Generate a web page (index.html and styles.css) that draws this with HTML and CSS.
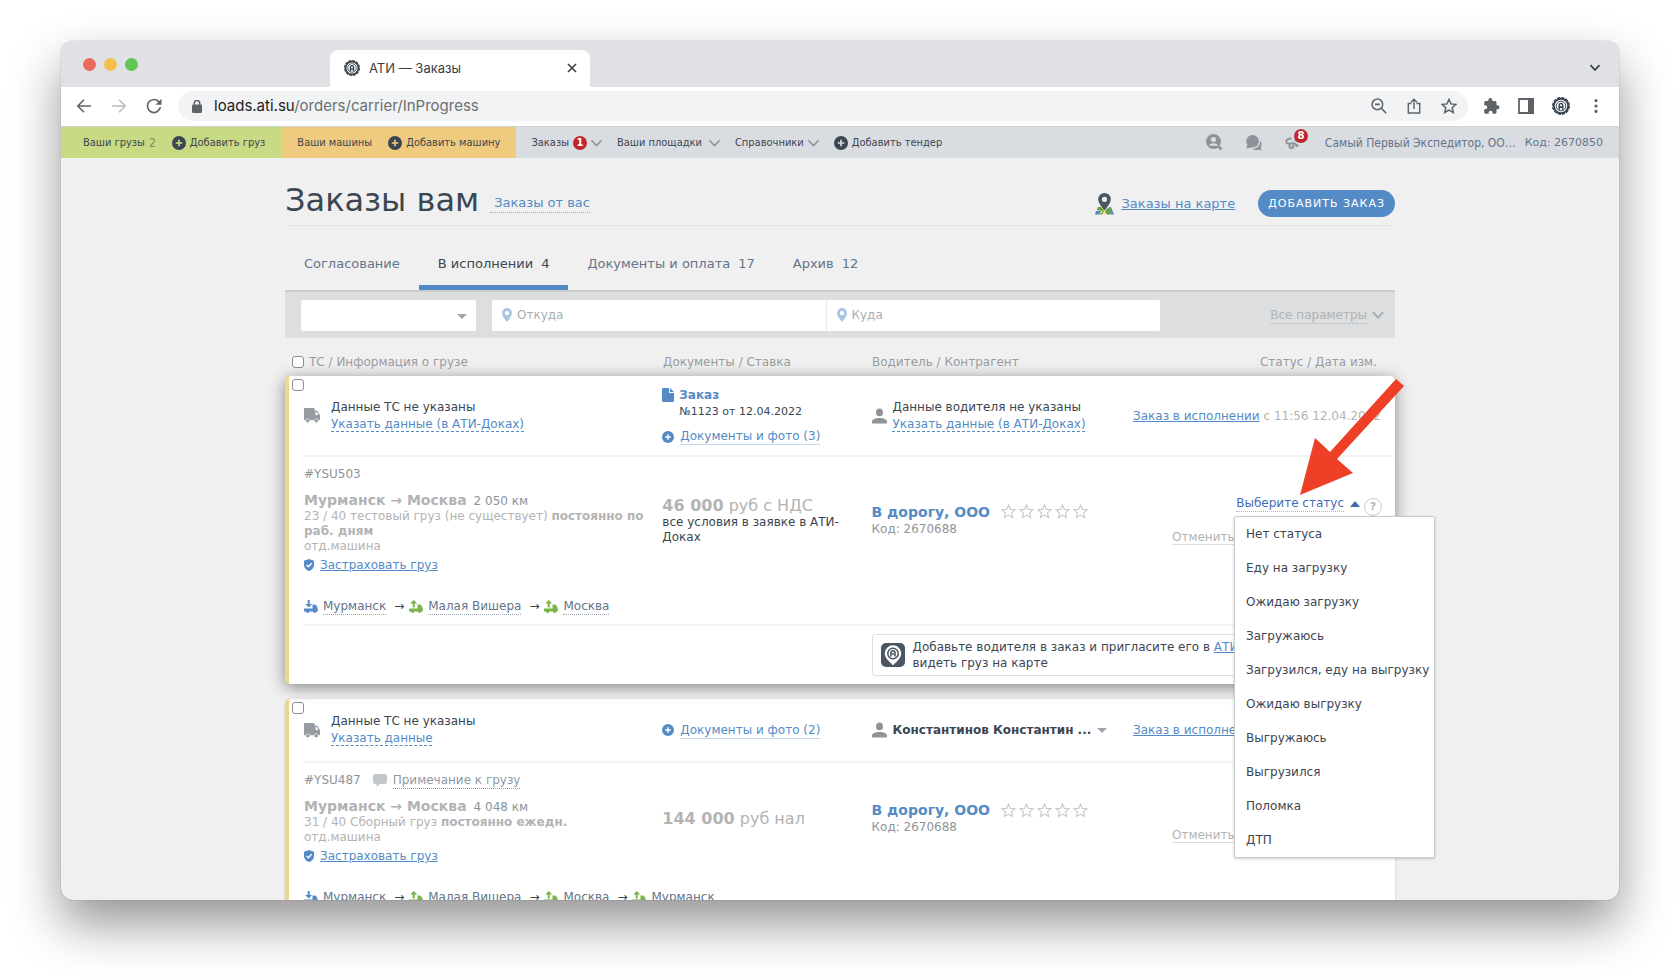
FILE: index.html
```html
<!DOCTYPE html>
<html lang="ru">
<head>
<meta charset="utf-8">
<meta name="viewport" content="width=device-width, initial-scale=1">
<title>АТИ — Заказы</title>
<link rel="stylesheet" href="styles.css">
</head>
<body>
<svg class="sprite" aria-hidden="true">
  <symbol id="logo" viewBox="0 0 24 24"><circle cx="12" cy="12" r="11" fill="none" stroke="currentColor" stroke-width="2" stroke-dasharray="4.3 1.46"/><circle cx="12" cy="12" r="9.6" fill="none" stroke="currentColor" stroke-width="2.6"/><circle cx="12" cy="12" r="6.4" fill="none" stroke="currentColor" stroke-width="1.3"/><path d="M8.6 17v-5a3.4 4.4 0 0 1 6.8 0v5h-2.2v-2.4h-2.4V17zM12 9.6a1.5 1.5 0 1 0 0 3 1.5 1.5 0 0 0 0-3z" fill="currentColor" fill-rule="evenodd"/></symbol>
  <symbol id="plus" viewBox="0 0 14 14"><circle cx="7" cy="7" r="7" fill="currentColor"/><path d="M7 3.7v6.6M3.7 7h6.6" stroke="var(--mark,#fff)" stroke-width="1.7"/></symbol>
  <symbol id="chev" viewBox="0 0 14 8"><path d="M1.5 1 7 6.8 12.5 1" fill="none" stroke="currentColor" stroke-width="1.7"/></symbol>
  <symbol id="truck" viewBox="0 0 16 15"><path d="M1 0h8.6a1 1 0 0 1 1 1v1.5h1.9a1 1 0 0 1 .8.4L15.7 6.4a1.5 1.5 0 0 1 .3.8V11.5a.8.8 0 0 1-.8.8h-.7a2.3 2.3 0 0 0-4.5 0H6a2.3 2.3 0 0 0-4.5 0H.9a.9.9 0 0 1-.9-.9V1a1 1 0 0 1 1-1zM11.5 4v3h3.2l-2-3z" fill="currentColor" fill-rule="evenodd"/><circle cx="3.8" cy="12.7" r="1.8" fill="currentColor"/><circle cx="12.2" cy="12.7" r="1.8" fill="currentColor"/></symbol>
  <symbol id="person" viewBox="0 0 16 16"><ellipse cx="8" cy="4.200" rx="3.700" ry="4.100" fill="currentColor"/><path d="M0 16v-2c0-2.700 3.600-4 8-4s8 1.300 8 4v2z" fill="currentColor"/></symbol>
  <symbol id="doc" viewBox="0 0 12 14"><path d="M1.3 0H7v5h5v7.700a1.300 1.300 0 0 1-1.300 1.300H1.300A1.300 1.300 0 0 1 0 12.700V1.300A1.300 1.300 0 0 1 1.300 0zM8 0l4 4H8z" fill="currentColor"/></symbol>
  <symbol id="shield" viewBox="0 0 10 12"><path d="M5 0l5 1.800V6c0 3-2.200 5.200-5 6-2.800-.8-5-3-5-6V1.800z" fill="currentColor"/><path d="M2.600 5.900l1.800 1.800 3.200-3.400" fill="none" stroke="#fff" stroke-width="1.400"/></symbol>
  <symbol id="load" viewBox="0 0 14 13"><path d="M3.700 0h2v4h2.500L4.700 7.500 1.200 4h2.500zM0 8.500h8.500V4.500h2.300c1.500.3 2.700 2.400 3 4.500v2.500h-1.300a1.900 1.900 0 0 1-3.700 0H5.500a1.900 1.900 0 0 1-3.700 0H0z" fill="currentColor"/></symbol>
  <symbol id="unload" viewBox="0 0 14 13"><path d="M4.700 0 8.200 3.500H5.700v4h-2v-4H1.200zM0 8.500h8.500V4.500h2.300c1.500.3 2.700 2.400 3 4.500v2.500h-1.300a1.900 1.900 0 0 1-3.700 0H5.500a1.900 1.900 0 0 1-3.700 0H0z" fill="currentColor"/></symbol>
  <symbol id="pin" viewBox="0 0 10 14"><path d="M5 0a5 5 0 0 1 5 5c0 3.500-5 9-5 9S0 8.500 0 5a5 5 0 0 1 5-5zm0 2.900a2.200 2.200 0 1 0 0 4.400 2.200 2.200 0 0 0 0-4.400z" fill="currentColor" fill-rule="evenodd"/></symbol>
  <symbol id="stars" viewBox="0 0 87 15"><g fill="none" stroke="#c8c8c8" stroke-width="1.1"><path id="s" d="M7.500 1 9.400 5.400 14 5.800 10.500 8.900 11.600 13.600 7.500 11.100 3.400 13.600 4.500 8.900 1 5.800 5.600 5.400z"/><use href="#s" x="18"/><use href="#s" x="36"/><use href="#s" x="54"/><use href="#s" x="72"/></g></symbol>
</svg>

<div class="window">
  <header class="strip">
    <div class="lights"><i class="red"></i><i class="amber"></i><i class="green"></i></div>
    <div class="tab"><svg class="fav"><use href="#logo"/></svg><span>АТИ — Заказы</span>
      <button class="plain close" aria-label="Закрыть"><svg width="10" height="10" viewBox="0 0 10 10"><path d="M1 1l8 8M9 1l-8 8" stroke="#3c4043" stroke-width="1.6"/></svg></button></div>
    <button class="plain more-tabs" aria-label="Вкладки"><svg width="12" height="8" viewBox="0 0 12 8"><path d="M1.500 1.200 6 6l4.500-4.800" fill="none" stroke="#3c4043" stroke-width="1.800"/></svg></button>
  </header>

  <div class="toolbar">
    <div class="history">
      <button class="plain" aria-label="Назад"><svg width="16" height="14" viewBox="0 0 16 14"><path d="M15 7H2M8 .8 1.800 7 8 13.200" fill="none" stroke="#5f6368" stroke-width="1.600"/></svg></button>
      <button class="plain" aria-label="Вперёд"><svg width="16" height="14" viewBox="0 0 16 14"><path d="M1 7H14M8 .8 14.200 7 8 13.200" fill="none" stroke="#babcbe" stroke-width="1.600"/></svg></button>
      <button class="plain" aria-label="Обновить"><svg width="16" height="16" viewBox="0 0 16 16"><path d="M13.300 4.200A6.500 6.500 0 1 0 14.400 9.200" fill="none" stroke="#5f6368" stroke-width="1.700"/><path d="M15.500.8v6H9.500z" fill="#5f6368"/></svg></button>
    </div>
    <div class="address">
      <svg width="10" height="13" viewBox="0 0 10 13"><path d="M2.200 5.500V3.300a2.800 2.800 0 0 1 5.600 0v2.200" fill="none" stroke="#5f6368" stroke-width="1.500"/><rect y="4.600" width="10" height="8.400" rx="1.200" fill="#5f6368"/></svg>
      <span class="url"><b>loads.ati.su</b>/orders/carrier/InProgress</span>
      <div class="address-tools">
        <button class="plain" aria-label="Масштаб"><svg width="16" height="16" viewBox="0 0 16 16"><circle cx="6.400" cy="6.400" r="5.300" fill="none" stroke="#5f6368" stroke-width="1.500"/><path d="M10.300 10.300l4.900 4.900M4 6.400h4.800" stroke="#5f6368" stroke-width="1.600"/></svg></button>
        <button class="plain" aria-label="Поделиться"><svg width="14" height="16" viewBox="0 0 14 16"><path d="M4.500 5.500H1.300v9.500h11.400V5.500H9.500M7 11V1.500M4 4.200l3-3 3 3" fill="none" stroke="#5f6368" stroke-width="1.400"/></svg></button>
        <button class="plain" aria-label="В закладки"><svg width="16" height="16" viewBox="0 0 16 16"><path d="M8 1.400l2 4.500 4.900.5-3.700 3.300 1.100 4.800L8 12l-4.300 2.500 1.100-4.800L1.100 6.400 6 5.900z" fill="none" stroke="#5f6368" stroke-width="1.500"/></svg></button>
      </div>
    </div>
    <div class="extensions">
      <button class="plain" aria-label="Расширения"><svg width="16" height="16" viewBox="0 0 16 16"><path d="M13.500 7.300h-1V4.500c0-.8-.7-1.500-1.500-1.500H8.300V2a2 2 0 0 0-4 0v1H1.700C.9 3 .2 3.700.2 4.500v2.700h1a2 2 0 0 1 0 4.100h-1v3c0 .8.700 1.500 1.500 1.500h2.900v-1a2 2 0 0 1 4 0v1H11c.8 0 1.500-.7 1.500-1.500v-3h1a2 2 0 0 0 0-4z" fill="#5f6368"/></svg></button>
      <button class="plain" aria-label="Боковая панель"><svg width="16" height="16" viewBox="0 0 16 16"><path d="M1 1h14v14H1z" fill="none" stroke="#5f6368" stroke-width="1.800"/><path d="M10 0h6v16h-6z" fill="#5f6368"/></svg></button>
      <button class="plain" aria-label="АТИ"><svg class="ext-logo"><use href="#logo"/></svg></button>
      <button class="plain" aria-label="Меню"><svg width="16" height="14" viewBox="0 0 16 14"><g fill="#5f6368"><circle cx="8" cy="1.600" r="1.600"/><circle cx="8" cy="7" r="1.600"/><circle cx="8" cy="12.400" r="1.600"/></g></svg></button>
    </div>
  </div>

  <nav class="nav">
    <div class="zone loads"><a href="#">Ваши грузы <small>2</small></a><a href="#" class="add"><svg><use href="#plus"/></svg>Добавить груз</a></div>
    <div class="zone trucks"><a href="#">Ваши машины</a><a href="#" class="add"><svg><use href="#plus"/></svg>Добавить машину</a></div>
    <div class="menus">
      <a href="#" class="menu">Заказы<span class="count">1</span><svg><use href="#chev"/></svg></a>
      <a href="#" class="menu wide">Ваши площадки<svg><use href="#chev"/></svg></a>
      <a href="#" class="menu">Справочники<svg><use href="#chev"/></svg></a>
      <a href="#" class="add"><svg><use href="#plus"/></svg>Добавить тендер</a>
    </div>
    <div class="account">
      <button class="plain" aria-label="Поиск участников"><svg width="17" height="17" viewBox="0 0 17 17"><path d="M7.500 0a7.500 7.500 0 1 1 0 15 7.500 7.500 0 0 1 0-15zm0 3a2.500 2.500 0 1 0 0 5 2.500 2.500 0 0 0 0-5zm0 6.300c-2.300 0-4.300 1-4.300 2.500h8.600c0-1.500-2-2.500-4.300-2.500z" fill="currentColor" fill-rule="evenodd"/><path d="M12.500 12.500l3 3" stroke="currentColor" stroke-width="2.600"/></svg></button>
      <button class="plain" aria-label="Сообщения"><svg width="16" height="16" viewBox="0 0 16 16"><path d="M6.500 0a6.300 6.300 0 1 1-1.500 12.400L.5 13.400l.8-3.700A6.300 6.300 0 0 1 6.500 0z" fill="currentColor"/><path d="M14.200 5.500c1.900 2.300 1.700 4.900.4 6.700l1 3.300-3.600-.8c-2.300.9-4.200.4-5.500-.6 4.600 0 8-3.600 7.700-8.600z" fill="currentColor"/></svg></button>
      <button class="plain bell" aria-label="Уведомления"><svg width="14" height="15" viewBox="0 0 14 15"><path d="M6.500 3.500C4 3.500 1.300 4.200 1.300 6.500S4 9 5.500 8.600c2-.6 4-.6 6 1.400M5.200 9.500c-1.400 1.500-.8 3.500 1.300 3.500s2.300-2 1-3.500M9.500 4.500c1 .2 2 1 2.500 2.500" fill="none" stroke="currentColor" stroke-width="2"/><circle cx="12" cy="10.500" r="1.600" fill="currentColor"/></svg><span class="count">8</span></button>
      <a href="#">Самый Первый Экспедитор, ОО…</a><span>Код: 2670850</span>
    </div>
  </nav>

  <main class="page">
    <div class="title-row">
      <h1>Заказы вам</h1><a href="#" class="from-you">Заказы от вас</a>
      <a href="#" class="map-link"><svg width="19" height="22" viewBox="0 0 19 22"><path d="M3 14h13l3 7.500H0z" fill="#f3e3a0"/><path d="M1 18h5l-1.500 3.500H0zM14 14l2 0 3 7.500h-3zM10 15l6 5-1 1.500z" fill="#548bc6"/><path d="M3 14h3l3 4-2 3.500H5L8 18l-6-1zM12 21.500l-2-3 3-3.500 3 1-1 5.500z" fill="#5fa13c"/><path d="M9.500 0a6.300 6.300 0 0 1 6.300 6.300c0 4.500-6.300 11.200-6.300 11.200S3.200 10.800 3.200 6.300A6.300 6.300 0 0 1 9.500 0zm0 3.700a2.600 2.600 0 1 0 0 5.200 2.600 2.600 0 0 0 0-5.200z" fill="#475863" fill-rule="evenodd"/></svg><span>Заказы на карте</span></a>
      <button class="primary">ДОБАВИТЬ ЗАКАЗ</button>
    </div>

    <div class="tabs">
      <a href="#">Согласование</a><a href="#" class="active">В исполнении<span>4</span></a><a href="#">Документы и оплата<span>17</span></a><a href="#">Архив<span>12</span></a>
    </div>

    <form class="filter">
      <div class="pick"><select aria-label="Статус"><option></option></select><i class="caret"></i></div>
      <div class="places">
        <label><svg><use href="#pin"/></svg><input type="text" placeholder="Откуда" aria-label="Откуда"></label>
        <label><svg><use href="#pin"/></svg><input type="text" placeholder="Куда" aria-label="Куда"></label>
      </div>
      <button type="button" class="plain all"><span>Все параметры</span><svg width="12" height="8" viewBox="0 0 14 9"><path d="M1 1l6 6.500L13 1" fill="none" stroke="#a9adb1" stroke-width="2.200"/></svg></button>
    </form>

    <div class="columns heading">
      <label class="c1"><input type="checkbox">ТС / Информация о грузе</label><span>Документы / Ставка</span><span>Водитель / Контрагент</span><span class="end">Статус / Дата изм.</span>
    </div>

    <article class="card raised">
      <input type="checkbox" class="tick" aria-label="Выбрать заказ YSU503">
      <div class="columns head">
        <div class="who"><svg class="truck"><use href="#truck"/></svg><div><p>Данные ТС не указаны</p><a href="#" class="dashed">Указать данные (в АТИ-Доках)</a></div></div>
        <div class="docs">
          <a href="#" class="order"><svg><use href="#doc"/></svg>Заказ</a>
          <p class="number">№1123 от 12.04.2022</p>
          <a href="#" class="files"><svg><use href="#plus"/></svg><span>Документы и фото (3)</span></a>
        </div>
        <div class="who"><svg class="person"><use href="#person"/></svg><div><p>Данные водителя не указаны</p><a href="#" class="dashed">Указать данные (в АТИ-Доках)</a></div></div>
        <div class="state"><a href="#">Заказ в исполнении</a> с 11:56 12.04.2022</div>
      </div>
      <div class="columns body">
        <div class="cargo">
          <p class="id">#YSU503</p>
          <p class="route"><b>Мурманск → Москва</b>2 050 км</p>
          <p class="goods">23 / 40 тестовый груз (не существует) <b>постоянно по раб. дням</b><br>отд.машина</p>
          <a href="#" class="insure"><svg><use href="#shield"/></svg><span>Застраховать груз</span></a>
        </div>
        <div class="price"><p class="sum"><b>46 000</b> руб с НДС</p><p>все условия в заявке в АТИ-Доках</p></div>
        <div class="firm"><p class="name"><a href="#">В дорогу, ООО</a><svg><use href="#stars"/></svg></p><p>Код: 2670688</p></div>
        <div class="actions">
          <div class="status"><button class="plain trigger" aria-expanded="true"><span>Выберите статус</span><i class="caret up"></i></button><button class="help" aria-label="Справка">?</button>
            <ul class="dropdown">
              <li><button>Нет статуса</button></li><li><button>Еду на загрузку</button></li><li><button>Ожидаю загрузку</button></li><li><button>Загружаюсь</button></li><li><button>Загрузился, еду на выгрузку</button></li><li><button>Ожидаю выгрузку</button></li><li><button>Выгружаюсь</button></li><li><button>Выгрузился</button></li><li><button>Поломка</button></li><li><button>ДТП</button></li>
            </ul>
          </div>
          <div class="cancel"><a href="#">Отменить заказ</a></div>
        </div>
      </div>
      <div class="points">
        <span class="load"><svg><use href="#load"/></svg><a href="#">Мурманск</a></span><i>→</i><span><svg><use href="#unload"/></svg><a href="#">Малая Вишера</a></span><i>→</i><span><svg><use href="#unload"/></svg><a href="#">Москва</a></span>
      </div>
      <div class="columns foot">
        <div class="invite">
          <svg width="24" height="24" viewBox="0 0 24 24"><rect width="24" height="24" rx="5" fill="#4b5663"/><path d="M12 2.200a8.300 8.300 0 0 1 8.300 8.300c0 5-8.300 11.700-8.300 11.700S3.700 15.500 3.700 10.500A8.300 8.300 0 0 1 12 2.200z" fill="#fff"/><circle cx="12" cy="10.500" r="5.200" fill="none" stroke="#4b5663" stroke-width="1.500"/><path d="M10 13.500v-3.400a2 2.300 0 0 1 4 0v3.400" fill="none" stroke="#4b5663" stroke-width="1.600"/><circle cx="12" cy="11" r="1" fill="#4b5663"/></svg>
          <p>Добавьте водителя в заказ и пригласите его в <a href="#">АТИ-Водитель</a>, чтобы видеть груз на карте</p>
        </div>
      </div>
      <svg class="pointer" width="104" height="118" viewBox="0 0 104 118" aria-hidden="true"><path d="M0 118 15 61l15 14L96 2l8 7-67 73 16 14z" fill="#ee4026"/></svg>
    </article>

    <article class="card">
      <input type="checkbox" class="tick" aria-label="Выбрать заказ YSU487">
      <div class="columns head">
        <div class="who"><svg class="truck"><use href="#truck"/></svg><div><p>Данные ТС не указаны</p><a href="#" class="dashed">Указать данные</a></div></div>
        <div class="docs"><a href="#" class="files"><svg><use href="#plus"/></svg><span>Документы и фото (2)</span></a></div>
        <div class="who"><svg class="person"><use href="#person"/></svg><button class="plain driver">Константинов Константин ...<i class="caret"></i></button></div>
        <div class="state"><a href="#">Заказ в исполнении</a> с 11:50 12.04.2022</div>
      </div>
      <div class="columns body">
        <div class="cargo">
          <p class="id">#YSU487<a href="#" class="note"><svg width="14" height="13" viewBox="0 0 14 13"><path d="M2 0h10a2 2 0 0 1 2 2v6a2 2 0 0 1-2 2H7l-3.500 3V10H2a2 2 0 0 1-2-2V2a2 2 0 0 1 2-2z" fill="#c4c7ca"/></svg><span>Примечание к грузу</span></a></p>
          <p class="route"><b>Мурманск → Москва</b>4 048 км</p>
          <p class="goods">31 / 40 Сборный груз <b>постоянно ежедн.</b><br>отд.машина</p>
          <a href="#" class="insure"><svg><use href="#shield"/></svg><span>Застраховать груз</span></a>
        </div>
        <div class="price"><p class="sum"><b>144 000</b> руб нал</p></div>
        <div class="firm"><p class="name"><a href="#">В дорогу, ООО</a><svg><use href="#stars"/></svg></p><p>Код: 2670688</p></div>
        <div class="actions">
          <div class="status"><button class="plain trigger"><span>Выберите статус</span><i class="caret"></i></button><button class="help" aria-label="Справка">?</button></div>
          <div class="cancel"><a href="#">Отменить заказ</a></div>
        </div>
      </div>
      <div class="points">
        <span class="load"><svg><use href="#load"/></svg><a href="#">Мурманск</a></span><i>→</i><span><svg><use href="#unload"/></svg><a href="#">Малая Вишера</a></span><i>→</i><span><svg><use href="#unload"/></svg><a href="#">Москва</a></span><i>→</i><span><svg><use href="#unload"/></svg><a href="#">Мурманск</a></span>
      </div>
    </article>
  </main>
</div>
</body>
</html>
```

FILE: styles.css
```css
* { box-sizing: border-box; }
body {
  margin: 0;
  padding: 41px 61px 80px;
  height: 100vh;
  overflow: hidden;
  background: #fff;
  color: #3c4652;
  font: 12px/18px "DejaVu Sans", Verdana, sans-serif;
}
p, h1, ul { margin: 0; padding: 0; }
ul { list-style: none; }
a { color: #548bc6; text-decoration: none; }
svg { display: block; flex: none; }
button, input, select { font: inherit; color: inherit; }
.plain { border: 0; padding: 0; margin: 0; background: none; }
.sprite { position: absolute; width: 0; height: 0; }

.window {
  height: 100%;
  display: flex;
  flex-direction: column;
  overflow: hidden;
  border-radius: 12px;
  background: #f0f0f0;
  box-shadow: 0 0 1px rgba(0,0,0,.5), 0 24px 50px rgba(0,0,0,.42);
}

/* browser chrome */
.strip { flex: none; display: flex; align-items: center; height: 46px; padding-left: 22px; background: #dfe1e5; }
.lights { display: flex; gap: 8px; width: 247px; }
.lights i { width: 13px; height: 13px; border-radius: 50%; }
.red { background: #ed6a5e; }
.amber { background: #f5bf4f; }
.green { background: #61c554; }
.tab {
  align-self: flex-end;
  display: flex;
  align-items: center;
  width: 260px;
  height: 37px;
  padding: 0 13px 2px 14px;
  border-radius: 8px 8px 0 0;
  background: #fff;
  color: #3c4043;
  font: 13px/18px Inter, Roboto, sans-serif;
}
.fav { width: 16px; height: 16px; margin-right: 9px; color: #3b4653; }
.close { margin-left: auto; }
.more-tabs { margin-left: auto; margin-right: 18px; padding-top: 8px; }
.toolbar { flex: none; display: flex; align-items: center; height: 39px; padding: 0 15px 1px 15px; background: #fff; }
.history { display: flex; align-items: center; gap: 19px; width: 102px; }
.address { flex: 1; display: flex; align-items: center; height: 30px; padding: 0 11px 0 14px; border-radius: 15px; background: #f1f3f4; }
.url { margin-left: 12px; color: #6b6f73; font: 15px/20px Inter, Roboto, sans-serif; }
.url b { color: #202124; font-weight: 400; }
.address-tools { margin-left: auto; display: flex; align-items: center; gap: 20px; }
.extensions { display: flex; align-items: center; gap: 18px; padding-left: 16px; }
.ext-logo { width: 18px; height: 18px; color: #3b4653; }

/* site navigation */
.nav { flex: none; display: flex; height: 32px; background: #d9dce1; border-top: 1px solid #cfd3d6; font-size: 11px; }
.nav a { display: flex; align-items: center; color: #3c4652; white-space: nowrap; font-family: "DejaVu Sans Condensed", "Noto Sans", sans-serif; }
.nav small { margin-left: 4px; font-size: 12px; color: #7d8c62; }
.zone { display: flex; gap: 16px; padding: 0 16px; }
.loads { background: #c8da83; padding-left: 22px; --mark: #c8da83; }
.trucks { background: #eecb7f; --mark: #eecb7f; }
.add svg { width: 14px; height: 14px; margin-right: 4px; }
.menus { display: flex; gap: 14px; padding-left: 15px; --mark: #d9dce1; }
.menu svg { width: 13px; height: 8px; margin-left: 3px; color: #8f959b; }
.wide svg { margin-left: 6px; }
.count { width: 14px; height: 14px; border-radius: 50%; background: #c1272d; color: #fff; text-align: center; font: bold 10px/14px "DejaVu Sans", sans-serif; }
.menu .count { margin-left: 4px; }
.account { margin-left: auto; display: flex; align-items: center; padding-right: 16px; color: #8c949a; }
.account .plain { margin-right: 23px; color: #8c949a; }
.account a, .account span { color: #64748a; }
.account a { margin-right: 9px; font-size: 12px; }
.account .bell { position: relative; margin-right: 26px; }
.account .bell .count { position: absolute; right: -9px; top: -6px; color: #fff; }

/* page */
.page { width: 100%; max-width: 1110px; margin: 0 auto; }
.title-row { display: flex; align-items: center; height: 68px; padding-top: 19px; padding-bottom: 3px; border-bottom: 1px solid #e2e2e2; }
h1 { font-size: 32px; line-height: 40px; font-weight: 400; }
.from-you { margin-left: 11px; padding-left: 4px; line-height: 18px; font-size: 13px; border-bottom: 1px dotted #8fb4dc; margin-top: 8px; }
.map-link { margin-left: auto; display: flex; align-items: center; gap: 8px; font-size: 13px; margin-top: 8px; }
.map-link span { text-decoration: underline; }
.primary { margin: 8px 0 0 23px; height: 27px; padding: 0 10px; border: 0; border-radius: 14px; background: #548bc6; color: #fff; font-size: 11px; letter-spacing: 1px; }
.tabs { display: flex; margin-top: 16px; height: 48px; }
.tabs a { display: flex; gap: 8px; padding: 13px 19px 0; font-size: 13px; color: #64748a; }
.tabs .active { color: #3c4652; border-bottom: 5px solid #548bc6; }
.filter { display: flex; align-items: center; height: 48px; padding: 0 11px 0 16px; background: #dcdee0; border-top: 2px solid #c9cbcd; }
.pick { position: relative; width: 175px; }
.pick select { display: block; width: 100%; height: 31px; border: 0; border-radius: 2px; background: #fff; appearance: none; }
.caret { border: 5px solid transparent; border-top-color: #9ea5ab; border-bottom: 0; }
.pick .caret { position: absolute; right: 9px; top: 14px; }
.places { display: flex; width: 668px; margin-left: 16px; border-radius: 2px; background: #fff; }
.places label { flex: 1; display: flex; align-items: center; height: 31px; padding-left: 10px; }
.places label + label { border-left: 1px solid #e8eaec; }
.places svg { width: 10px; height: 14px; color: #a9c5e3; }
.places input { flex: 1; min-width: 0; border: 0; outline: 0; background: none; padding: 0 5px; }
.places input::placeholder { color: #a9adb1; opacity: 1; }
.all { margin-left: auto; display: flex; align-items: center; gap: 5px; color: #b0b3b6; }
.all span { border-bottom: 1px dotted #b0b3b6; line-height: 16px; }

.columns { display: grid; grid-template-columns: 358fr 209fr 246fr 277fr; align-items: center; }
input[type="checkbox"] { appearance: none; width: 12px; height: 12px; margin: 0; border: 1px solid #8b8f93; border-radius: 3px; background: #fff; }
.heading { padding: 15px 0 5px 20px; color: #999da0; }
.heading .c1 { display: flex; align-items: center; gap: 5px; margin-left: -13px; }
.heading .end { text-align: right; padding-right: 18px; }

.card { position: relative; margin-bottom: 15px; padding-left: 15px; border-left: 4px solid #f0d591; border-radius: 5px; background: #fff; box-shadow: 0 1px 3px rgba(0,0,0,.15); }
.raised { z-index: 2; box-shadow: 0 3px 16px rgba(0,0,0,.45); }
.tick { position: absolute; left: 3px; top: 3px; }
.head { border-bottom: 2px solid #f4f4f4; }
.who { display: flex; align-items: center; gap: 6px; padding: 14px 0; line-height: 17px; }
.truck { width: 16px; height: 15px; margin-right: 5px; color: #959ba0; }
.person { width: 15px; height: 16px; color: #8f9498; }
.dashed { text-decoration: underline dashed; text-underline-offset: 3px; }
.docs { padding: 10px 0; }
.docs a { display: flex; align-items: center; }
.order { font-weight: bold; gap: 5px; }
.order svg { width: 12px; height: 14px; }
.number { padding-left: 17px; font-size: 11px; line-height: 16px; margin-bottom: 8px; }
.files { gap: 6px; }
.files svg { width: 12px; height: 12px; }
.files span { line-height: 16px; border-bottom: 1px solid #c3d7ec; }
.state { text-align: right; padding-right: 14px; color: #b3b3b3; white-space: nowrap; }
.state a { text-decoration: underline; }
.driver { display: flex; align-items: center; gap: 6px; font-weight: bold; white-space: nowrap; }

.cargo { padding-top: 8px; color: #b3b3b3; }
.id { display: flex; align-items: center; margin-bottom: 9px; color: #8f9498; }
.note { display: flex; align-items: center; gap: 6px; margin-left: 12px; color: #8f9aa5; }
.note span { line-height: 16px; border-bottom: 1px dotted #8f9aa5; }
.route { font-size: 12px; line-height: 16px; color: #8b949c; }
.route b { margin-right: 7px; font-size: 14px; color: #b3b3b3; }
.goods { max-width: 340px; line-height: 15px; margin-bottom: 2px; }
.insure { display: flex; align-items: center; gap: 6px; }
.insure svg { width: 10px; height: 12px; }
.insure span { text-decoration: underline; }
.price, .firm, .actions { padding-top: 9px; }
.price { line-height: 15px; padding-right: 20px; }
.sum { font-size: 16px; line-height: 19px; color: #b3b3b3; }
.firm { color: #8f9498; line-height: 17px; }
.name { display: flex; align-items: center; gap: 11px; line-height: 18px; }
.name a { font-size: 14px; font-weight: bold; white-space: nowrap; }
.name svg { width: 87px; height: 15px; }
.actions { display: flex; flex-direction: column; align-items: flex-end; gap: 12px; padding-right: 13px; }
.status { position: relative; display: flex; align-items: flex-start; }
.trigger { display: flex; align-items: center; gap: 6px; height: 18px; color: #3f6cb8; }
.trigger span { line-height: 16px; border-bottom: 1px dotted #a9b6cc; }
.up { border-top: 0; border-bottom: 6px solid #3f6cb8; }
.help { width: 18px; height: 18px; margin: 3px 0 0 4px; padding: 0; border: 1px solid #ccc; border-radius: 50%; background: #fff; color: #b3b3b3; font: bold 11px/14px "DejaVu Sans", sans-serif; }
.dropdown { position: absolute; z-index: 3; top: 21px; right: -53px; width: 201px; border: 1px solid #ccc; border-radius: 2px; background: #fff; box-shadow: 0 1px 3px rgba(0,0,0,.2); }
.dropdown button { display: block; width: 100%; height: 34px; padding: 0 0 0 11px; border: 0; background: none; text-align: left; white-space: nowrap; font-size: 12px; }
.cancel { width: 210px; }
.cancel a { color: #b3b3b3; border-bottom: 1px solid #ddd; }
.points { display: flex; align-items: center; margin: 23px 0 0; }
.points span { display: flex; align-items: center; gap: 5px; color: #79b547; }
.points .load { color: #548bc6; }
.points svg { width: 14px; height: 13px; }
.points a { line-height: 16px; color: #64748a; border-bottom: 1px dotted #9aa5b1; }
.points i { margin: 0 5px 0 8px; font-style: normal; }
.foot { margin-top: 9px; padding: 8px 0; border-top: 2px solid #f4f4f4; }
.invite { grid-column: 3 / 5; display: flex; align-items: center; gap: 8px; margin-right: 14px; padding: 4px 8px; border: 1px solid #e0e0e0; border-radius: 3px; line-height: 16px; }
.invite a { text-decoration: underline; }
.pointer { position: absolute; z-index: 4; top: 1px; right: -9px; }
```
